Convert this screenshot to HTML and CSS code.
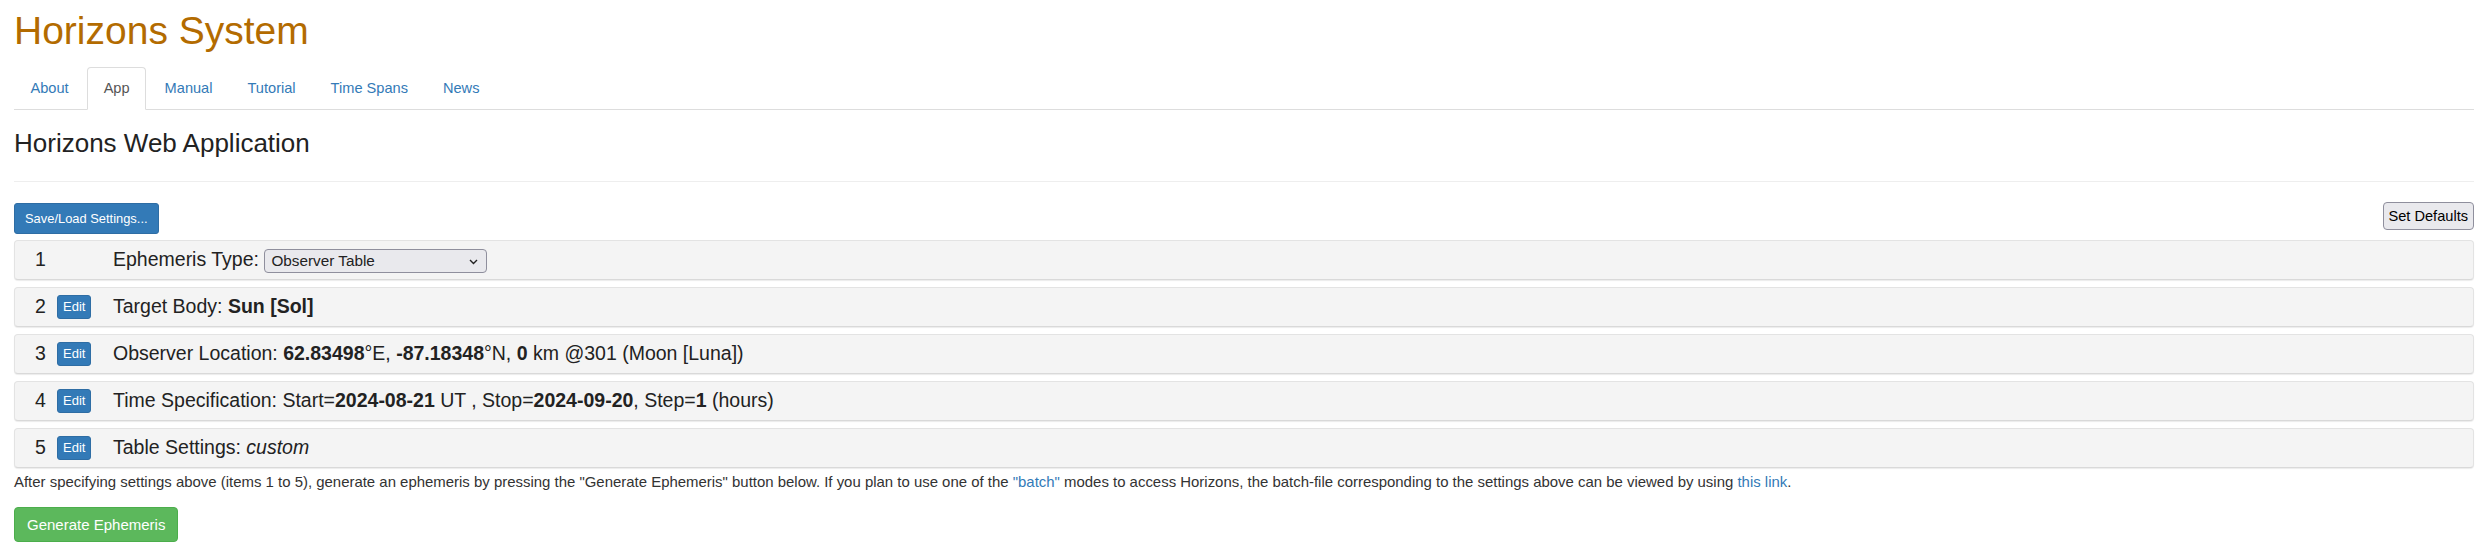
FILE: index.html
```html
<!DOCTYPE html>
<html lang="en">
<head>
<meta charset="utf-8">
<title>Horizons System</title>
<link rel="stylesheet" href="styles.css">
</head>
<body>
<div class="container">
  <h1 class="site-title">Horizons System</h1>
  <ul class="nav-tabs">
    <li><a href="#">About</a></li>
    <li class="active"><a href="#">App</a></li>
    <li><a href="#">Manual</a></li>
    <li><a href="#">Tutorial</a></li>
    <li><a href="#">Time Spans</a></li>
    <li><a href="#">News</a></li>
  </ul>
  <h3 class="page-title">Horizons Web Application</h3>
  <hr class="divider">
  <div class="toolbar">
    <button class="btn btn-primary btn-sm">Save/Load Settings...</button>
    <button class="btn-native">Set Defaults</button>
  </div>
  <div class="settings">
    <div class="setting">
      <span class="num">1</span>
      <span class="edit-cell"></span>
      <span class="label">Ephemeris Type: <span class="select-wrap"><select class="select"><option>Observer Table</option></select><svg class="chev" width="9" height="6" viewBox="0 0 9 6"><path d="M1 1 L4.5 4.5 L8 1" fill="none" stroke="#222" stroke-width="1.4"/></svg></span></span>
    </div>
    <div class="setting">
      <span class="num">2</span>
      <span class="edit-cell"><button class="btn btn-primary btn-xs">Edit</button></span>
      <span class="label">Target Body: <b>Sun [Sol]</b></span>
    </div>
    <div class="setting">
      <span class="num">3</span>
      <span class="edit-cell"><button class="btn btn-primary btn-xs">Edit</button></span>
      <span class="label">Observer Location: <b>62.83498</b>&deg;E, <b>-87.18348</b>&deg;N, <b>0</b> km @301 (Moon [Luna])</span>
    </div>
    <div class="setting">
      <span class="num">4</span>
      <span class="edit-cell"><button class="btn btn-primary btn-xs">Edit</button></span>
      <span class="label">Time Specification: Start=<b>2024-08-21</b> UT , Stop=<b>2024-09-20</b>, Step=<b>1</b> (hours)</span>
    </div>
    <div class="setting">
      <span class="num">5</span>
      <span class="edit-cell"><button class="btn btn-primary btn-xs">Edit</button></span>
      <span class="label">Table Settings: <i>custom</i></span>
    </div>
  </div>
  <p class="note">After specifying settings above (items 1 to 5), generate an ephemeris by pressing the "Generate Ephemeris" button below. If you plan to use one of the <a href="#">"batch"</a> modes to access Horizons, the batch-file corresponding to the settings above can be viewed by using <a href="#">this link</a>.</p>
  <button class="btn btn-success">Generate Ephemeris</button>
</div>
</body>
</html>
```
FILE: styles.css
```css
* { box-sizing: border-box; }
html, body { margin: 0; padding: 0; background: #fff; }
body {
  font-family: "Liberation Sans", Arial, Helvetica, sans-serif;
  font-size: 15px;
  line-height: 1.43;
  color: #333;
}
a { color: #337ab7; text-decoration: none; }
.container { padding: 0 15px 0 14px; }

.site-title {
  margin: 9px 0 14px;
  font-size: 39px;
  font-weight: 500;
  line-height: 44px;
  color: #b36b00;
}

.nav-tabs {
  list-style: none;
  margin: 0;
  padding: 0;
  display: flex;
  border-bottom: 1px solid #ddd;
}
.nav-tabs li { margin: 0 2px -1px 0; }
.nav-tabs a {
  display: block;
  padding: 10px 15.5px;
  font-size: 14.6px;
  line-height: 21px;
  border: 1px solid transparent;
  border-radius: 4px 4px 0 0;
}
.nav-tabs .active a {
  color: #555;
  background: #fff;
  border-color: #ddd #ddd transparent;
}

.page-title {
  margin: 19px 0 0;
  font-size: 26px;
  font-weight: 500;
  line-height: 29px;
  color: #222;
}
.divider {
  margin: 23px 0 0;
  border: 0;
  border-top: 1px solid #eee;
}

.toolbar {
  display: flex;
  justify-content: space-between;
  align-items: flex-start;
  margin-top: 21px;
}
.btn {
  font-family: inherit;
  display: inline-block;
  border: 1px solid transparent;
  border-radius: 4px;
  color: #fff;
  cursor: pointer;
  font-size: 15px;
  line-height: 21px;
  padding: 6px 12px;
}
.btn-primary { background: #337ab7; border-color: #2e6da4; }
.btn-success { background: #5cb85c; border-color: #4cae4c; }
.btn-sm { font-size: 12.9px; padding: 5px 10px; line-height: 19px; border-radius: 3px; }
.btn-xs { font-size: 13px; padding: 1px 5px; line-height: 20px; border-radius: 3px; }
.btn-native {
  font-family: inherit;
  font-size: 14.6px;
  line-height: 18px;
  padding: 4px 5px;
  margin-top: -1px;
  background: #e9e9ed;
  color: #000;
  border: 1px solid #8f8f9d;
  border-radius: 4px;
}

.settings {
  margin-top: 6px;
  display: flex;
  flex-direction: column;
  gap: 7px;
}
.setting {
  height: 40px;
  display: flex;
  align-items: center;
  background: #f4f4f4;
  border: 1px solid #e3e3e3;
  border-bottom-color: #d9d9d9;
  border-radius: 4px;
  box-shadow: 0 1px 1px rgba(0,0,0,0.08);
  font-size: 19.5px;
  color: #222;
}
.num { width: 42px; padding-left: 20px; }
.edit-cell { width: 56px; display: flex; }
.label { white-space: nowrap; }
.select-wrap { position: relative; display: inline-block; vertical-align: middle; }
.select {
  appearance: none;
  -webkit-appearance: none;
  width: 223px;
  height: 24px;
  font-family: inherit;
  font-size: 15.3px;
  color: #222;
  padding: 0 6px;
  background: #e9e9ed;
  border: 1px solid #8f8f9d;
  border-radius: 4px;
  display: block;
}
.chev { position: absolute; right: 9px; top: 10px; pointer-events: none; }

.note {
  margin: 3px 0 15px;
  font-size: 14.95px;
  line-height: 21px;
  color: #333;
}
```
